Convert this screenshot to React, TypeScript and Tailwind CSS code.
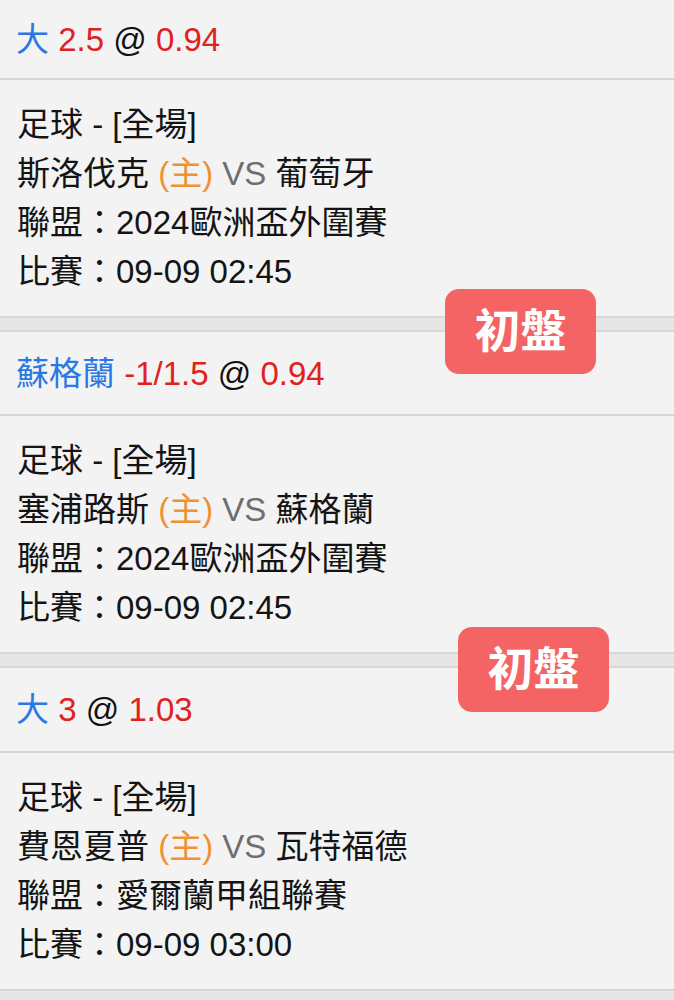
import React from "react";

type Item = {
  header: React.ReactNode;
  home: string;
  away: string;
  league: string;
  time: string;
  headerH: string;
};

const font = {
  fontFamily: '"Liberation Sans", "Noto Sans CJK TC", sans-serif',
};

function Header({ children, h }: { children: React.ReactNode; h: string }) {
  return (
    <div className={`${h} flex items-center px-[16px] border-b-2 border-[#d6d6d6] text-[33px] leading-none`}>
      <div>{children}</div>
    </div>
  );
}

function Block({ home, away, league, time }: { home: string; away: string; league: string; time: string }) {
  return (
    <div className="h-[238px] pt-[20px] pl-[17px] border-b-2 border-[#d6d6d6] text-[33px] leading-[49px] text-[#141414]">
      <div>足球 - [全場]</div>
      <div>
        {home} <span className="text-[#ef9233]">(主)</span> <span className="text-[#6e6e6e]">VS</span> {away}
      </div>
      <div>聯盟：{league}</div>
      <div>比賽：{time}</div>
    </div>
  );
}

function Band() {
  return <div className="h-[14px] bg-[#e6e6e6] border-b-2 border-[#d6d6d6]" />;
}

function Badge({ className }: { className: string }) {
  return (
    <div
      className={`absolute ${className} w-[151px] h-[85px] rounded-[14px] bg-[#f46464] text-white font-bold text-[46px] flex items-center justify-center`}
    >
      初盤
    </div>
  );
}

export default function App() {
  const blue = "text-[#2a78e4]";
  const red = "text-[#e0221d]";
  const items: Item[] = [
    {
      headerH: "h-[80px]",
      header: (
        <>
          <span className={blue}>大</span> <span className={red}>2.5</span> <span className="text-[#111]">@</span>{" "}
          <span className={red}>0.94</span>
        </>
      ),
      home: "斯洛伐克",
      away: "葡萄牙",
      league: "2024歐洲盃外圍賽",
      time: "09-09 02:45",
    },
    {
      headerH: "h-[84px]",
      header: (
        <>
          <span className={blue}>蘇格蘭</span> <span className={red}>-1/1.5</span> <span className="text-[#111]">@</span>{" "}
          <span className={red}>0.94</span>
        </>
      ),
      home: "塞浦路斯",
      away: "蘇格蘭",
      league: "2024歐洲盃外圍賽",
      time: "09-09 02:45",
    },
    {
      headerH: "h-[85px]",
      header: (
        <>
          <span className={blue}>大</span> <span className={red}>3</span> <span className="text-[#111]">@</span>{" "}
          <span className={red}>1.03</span>
        </>
      ),
      home: "費恩夏普",
      away: "瓦特福德",
      league: "愛爾蘭甲組聯賽",
      time: "09-09 03:00",
    },
  ];

  return (
    <div className="relative w-[674px] h-[1000px] overflow-hidden bg-[#f3f3f3]" style={font}>
      {items.map((it, i) => (
        <div key={i}>
          <Header h={it.headerH}>{it.header}</Header>
          <Block home={it.home} away={it.away} league={it.league} time={it.time} />
          <Band />
        </div>
      ))}
      <Badge className="left-[445px] top-[289px]" />
      <Badge className="left-[458px] top-[627px]" />
    </div>
  );
}
